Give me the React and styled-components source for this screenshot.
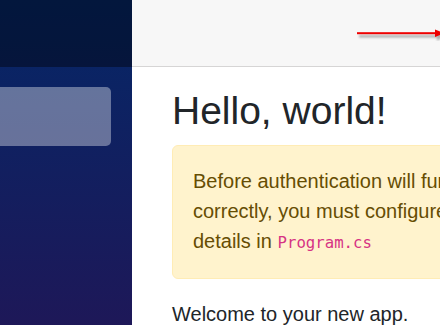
import React from "react";
import styled, { createGlobalStyle } from "styled-components";

const GlobalStyle = createGlobalStyle`
  html, body {
    margin: 0;
    padding: 0;
    background: #fff;
    overflow: hidden;
  }
  body {
    font-family: "Liberation Sans", Arial, sans-serif;
    color: #212529;
  }
`;

const Page = styled.div`
  display: flex;
  width: 440px;
  height: 325px;
  overflow: hidden;
`;

const Sidebar = styled.div`
  flex: 0 0 132px;
  display: flex;
  flex-direction: column;
  background-image: linear-gradient(180deg, rgb(5, 39, 103) 0px, #3a0647 700px);
`;

const SideTop = styled.div`
  flex-shrink: 0;
  height: 67px;
  background-color: rgba(0, 0, 0, 0.4);
`;

const Nav = styled.nav`
  padding-top: 20px;
`;

const NavItem = styled.div`
  width: 121px;
  height: 59px;
  margin-left: -10px;
  border-radius: 5px;
  background-color: rgba(255, 255, 255, 0.37);
`;

const Main = styled.main`
  flex: 1;
  display: flex;
  flex-direction: column;
  min-width: 0;
`;

const TopRow = styled.div`
  flex-shrink: 0;
  height: 66px;
  display: flex;
  align-items: center;
  justify-content: flex-end;
  background-color: #f7f7f7;
  border-bottom: 1px solid #d6d5d5;
`;

const Arrow = styled.svg`
  display: block;
  margin-right: -4px;
`;

const Content = styled.article`
  padding: 21px 0 0 40px;
`;

const Title = styled.h1`
  margin: 0 0 10px;
  font-size: 39px;
  font-weight: 400;
  line-height: 1.2;
  white-space: nowrap;
`;

const Alert = styled.div`
  width: 381px;
  padding: 20px;
  margin-bottom: 20px;
  background-color: #fff3cd;
  border: 1px solid #ffecb5;
  border-radius: 6px;
  color: #664d03;
  font-size: 20px;
  line-height: 30px;
`;

const Code = styled.code`
  font-family: "DejaVu Sans Mono", "Liberation Mono", monospace;
  font-size: 15.7px;
  color: #d63384;
`;

const Text = styled.p`
  margin: 0;
  font-size: 20px;
  line-height: 30px;
  white-space: nowrap;
`;

export default function App() {
  return (
    <>
      <GlobalStyle />
      <Page>
        <Sidebar>
          <SideTop />
          <Nav>
            <NavItem />
          </Nav>
        </Sidebar>
        <Main>
          <TopRow>
            <Arrow width="90" height="16" viewBox="0 0 90 16">
              <defs>
                <filter id="sh" x="-10%" y="-50%" width="130%" height="250%">
                  <feGaussianBlur stdDeviation="1.2" />
                </filter>
              </defs>
              <g filter="url(#sh)" opacity="0.45">
                <rect x="5" y="10" width="80" height="2.5" fill="#555" />
                <polygon points="83,6 90,11 83,16" fill="#555" />
              </g>
              <rect x="3" y="7.2" width="80" height="2" fill="#ee0000" />
              <polygon points="81,4.5 90,8.2 81,12" fill="#ee0000" />
            </Arrow>
          </TopRow>
          <Content>
            <Title>Hello, world!</Title>
            <Alert>
              Before authentication will function correctly, you must configure
              your provider details in <Code>Program.cs</Code>
            </Alert>
            <Text>Welcome to your new app.</Text>
          </Content>
        </Main>
      </Page>
    </>
  );
}
